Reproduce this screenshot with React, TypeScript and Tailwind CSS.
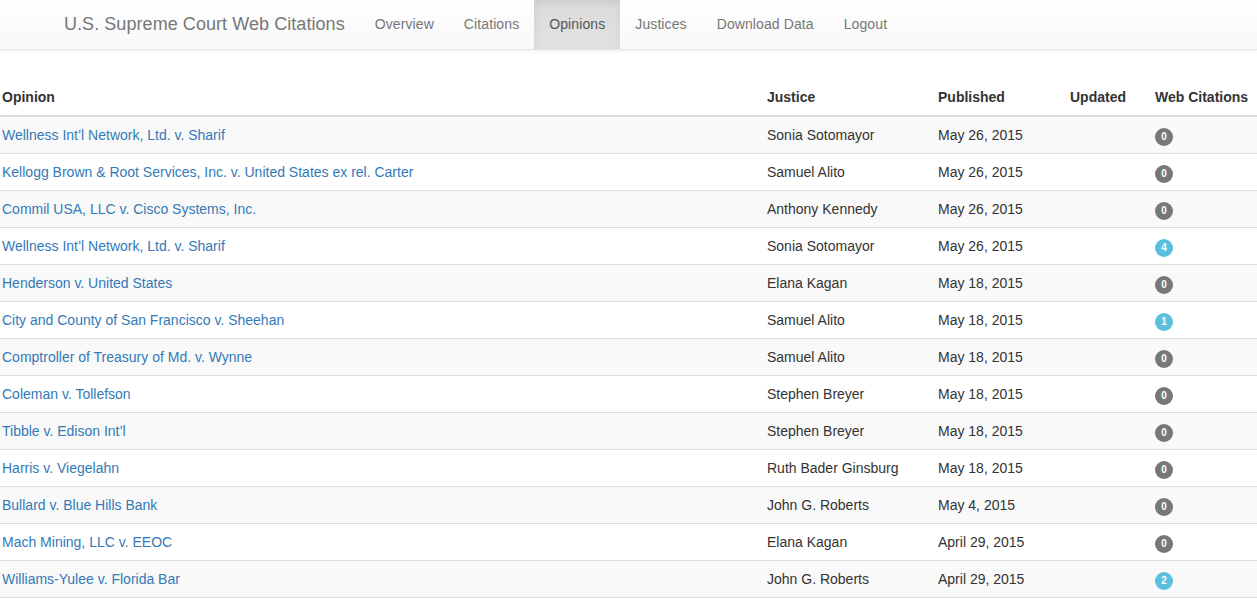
import React from "react";

type Row = { opinion: string; justice: string; published: string; cites: number };

const rows: Row[] = [
  { opinion: "Wellness Int\u2019l Network, Ltd. v. Sharif", justice: "Sonia Sotomayor", published: "May 26, 2015", cites: 0 },
  { opinion: "Kellogg Brown & Root Services, Inc. v. United States ex rel. Carter", justice: "Samuel Alito", published: "May 26, 2015", cites: 0 },
  { opinion: "Commil USA, LLC v. Cisco Systems, Inc.", justice: "Anthony Kennedy", published: "May 26, 2015", cites: 0 },
  { opinion: "Wellness Int\u2019l Network, Ltd. v. Sharif", justice: "Sonia Sotomayor", published: "May 26, 2015", cites: 4 },
  { opinion: "Henderson v. United States", justice: "Elana Kagan", published: "May 18, 2015", cites: 0 },
  { opinion: "City and County of San Francisco v. Sheehan", justice: "Samuel Alito", published: "May 18, 2015", cites: 1 },
  { opinion: "Comptroller of Treasury of Md. v. Wynne", justice: "Samuel Alito", published: "May 18, 2015", cites: 0 },
  { opinion: "Coleman v. Tollefson", justice: "Stephen Breyer", published: "May 18, 2015", cites: 0 },
  { opinion: "Tibble v. Edison Int\u2019l", justice: "Stephen Breyer", published: "May 18, 2015", cites: 0 },
  { opinion: "Harris v. Viegelahn", justice: "Ruth Bader Ginsburg", published: "May 18, 2015", cites: 0 },
  { opinion: "Bullard v. Blue Hills Bank", justice: "John G. Roberts", published: "May 4, 2015", cites: 0 },
  { opinion: "Mach Mining, LLC v. EEOC", justice: "Elana Kagan", published: "April 29, 2015", cites: 0 },
  { opinion: "Williams-Yulee v. Florida Bar", justice: "John G. Roberts", published: "April 29, 2015", cites: 2 },
];

const navItems = ["Overview", "Citations", "Opinions", "Justices", "Download Data", "Logout"];

function Badge({ n }: { n: number }) {
  return (
    <div className="flex h-[20px] items-center pt-[3px]">
      <span
        className={
          "flex h-[18px] w-[18px] items-center justify-center rounded-full text-[10px] font-bold leading-none text-white " +
          (n > 0 ? "bg-[#5bc0de]" : "bg-[#777777]")
        }
      >
        {n}
      </span>
    </div>
  );
}

export default function App() {
  return (
    <div className="min-h-screen bg-white font-['Liberation_Sans',Arial,sans-serif] text-[14px] leading-[20px] text-[#333333]">
      <nav className="h-[50px] border-b border-[#e7e7e7] bg-gradient-to-b from-white to-[#f8f8f8] shadow-[0_1px_5px_rgba(0,0,0,0.075)]">
        <div className="flex h-full items-stretch pl-[49px]">
          <a className="flex items-center px-[15px] pb-[1px] text-[18px] tracking-[0.06px] text-[#777777]">
            U.S. Supreme Court Web Citations
          </a>
          <ul className="flex items-stretch tracking-[0.1px]">
            {navItems.map((item) =>
              item === "Opinions" ? (
                <li
                  key={item}
                  className="flex items-center bg-gradient-to-b from-[#dbdbdb] to-[#e2e2e2] px-[15px] pb-[1px] text-[#555555] shadow-[inset_0_3px_9px_rgba(0,0,0,0.075)]"
                >
                  {item}
                </li>
              ) : (
                <li key={item} className="flex items-center px-[15px] pb-[1px] text-[#777777]">
                  {item}
                </li>
              )
            )}
          </ul>
        </div>
      </nav>

      <table className="mt-[29px] w-[1257px] table-fixed border-collapse">
        <colgroup>
          <col className="w-[759px]" />
          <col className="w-[171px]" />
          <col className="w-[132px]" />
          <col className="w-[85px]" />
          <col className="w-[110px]" />
        </colgroup>
        <thead>
          <tr className="text-left">
            <th className="border-b-2 border-[#dddddd] py-[8px] pl-[2px] font-bold">Opinion</th>
            <th className="border-b-2 border-[#dddddd] p-[8px] font-bold">Justice</th>
            <th className="border-b-2 border-[#dddddd] p-[8px] font-bold">Published</th>
            <th className="border-b-2 border-[#dddddd] p-[8px] font-bold">Updated</th>
            <th className="whitespace-nowrap border-b-2 border-[#dddddd] p-[8px] font-bold">Web Citations</th>
          </tr>
        </thead>
        <tbody>
          {rows.map((r, i) => (
            <tr key={i} className={i % 2 === 0 ? "bg-[#f9f9f9]" : "bg-white"}>
              <td className="border-t border-[#dddddd] py-[8px] pl-[2px] text-[#337ab7] whitespace-nowrap">{r.opinion}</td>
              <td className="border-t border-[#dddddd] p-[8px] whitespace-nowrap">{r.justice}</td>
              <td className="border-t border-[#dddddd] p-[8px] whitespace-nowrap">{r.published}</td>
              <td className="border-t border-[#dddddd] p-[8px]"></td>
              <td className="border-t border-[#dddddd] p-[8px]">
                <Badge n={r.cites} />
              </td>
            </tr>
          ))}
          <tr className="bg-white">
            <td className="h-[37px] border-t border-[#dddddd]" colSpan={5}></td>
          </tr>
        </tbody>
      </table>
    </div>
  );
}
